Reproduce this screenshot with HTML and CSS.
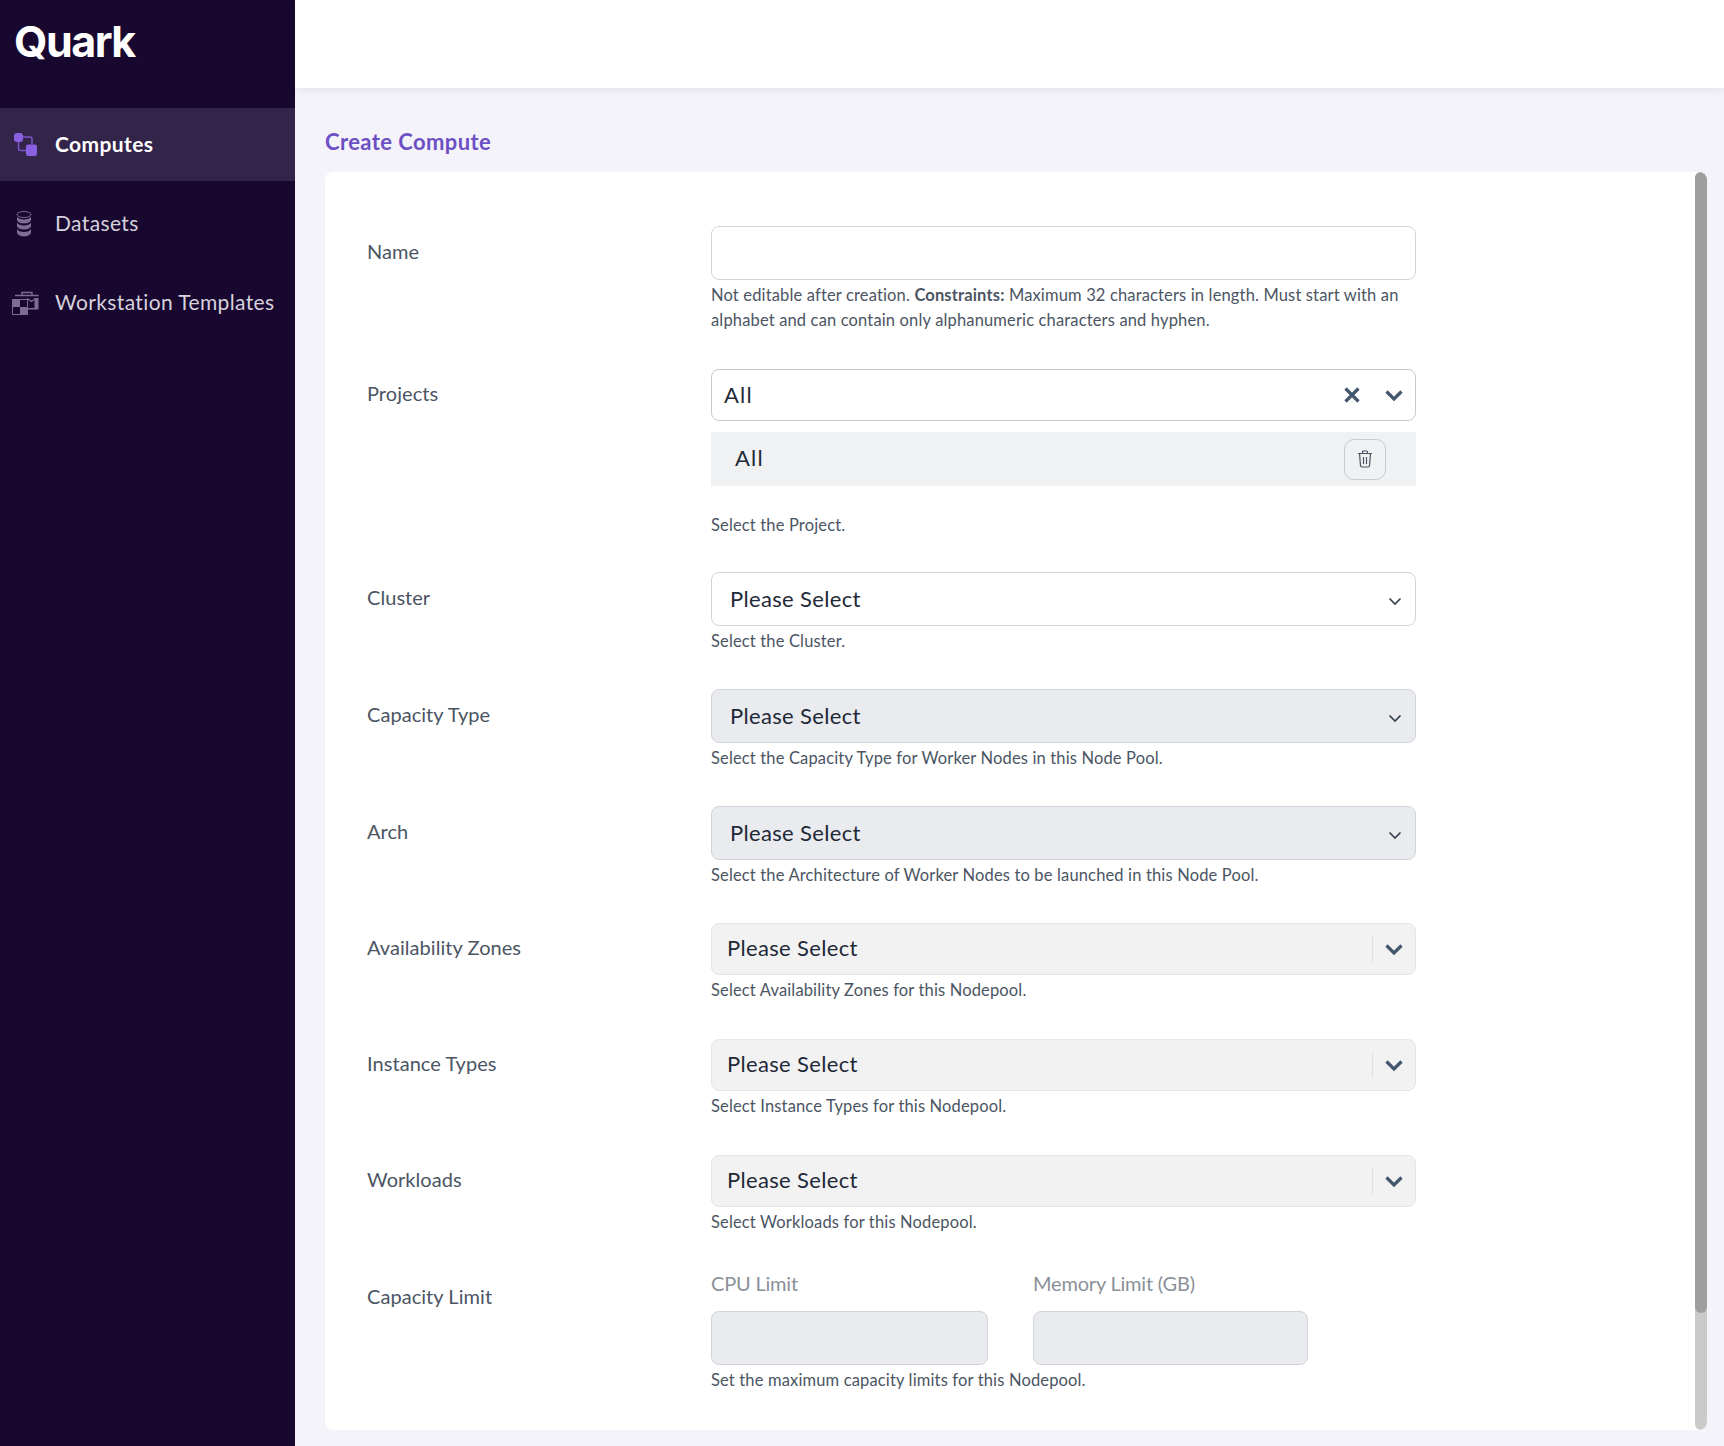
FILE: index.html
```html
<!DOCTYPE html>
<html lang="en">
<head>
<meta charset="utf-8">
<title>Create Compute</title>
<link rel="stylesheet" href="styles.css">
</head>
<body>
<div class="app">
  <aside class="sidebar">
    <div class="logo">Quark</div>
    <nav class="nav">
      <a class="nav-item active">
        <span class="nav-icon">
          <svg class="icon-compute" width="23" height="23" viewBox="0 0 23 23"><rect x="0" y="0" width="9" height="9" rx="3" fill="#8a5fe0"/><rect x="12" y="11.500" width="11" height="11.500" rx="2" fill="#8a5fe0"/><path d="M9 4h7q2 0 2 2v5.500M4.500 9v6.500q0 2 2 2H12" fill="none" stroke="#7b55c8" stroke-width="1.500"/></svg>
        </span>
        <span class="nav-text">Computes</span>
      </a>
      <a class="nav-item">
        <span class="nav-icon">
          <svg class="icon-db" width="16" height="26" viewBox="0 0 16 26"><ellipse cx="8" cy="3.500" rx="7" ry="3" fill="none" stroke="#7a6a90" stroke-width="1"/><path d="M1 5.500c1 2 3.500 3 7 3s6-1 7-3v4c-1 2-3.500 3-7 3s-6-1-7-3z" fill="#7d6c95"/><path d="M1 11.500c1 2 3.500 3 7 3s6-1 7-3v4c-1 2-3.500 3-7 3s-6-1-7-3z" fill="#7d6c95"/><path d="M1 18c1 2 3.500 3 7 3s6-1 7-3v4c-1 2-3.500 3.500-7 3.500s-6-1.500-7-3.500z" fill="#7d6c95"/></svg>
        </span>
        <span class="nav-text">Datasets</span>
      </a>
      <a class="nav-item">
        <span class="nav-icon">
          <svg class="icon-case" width="27" height="24" viewBox="0 0 27 24"><rect x="0.500" y="8.500" width="15" height="15" fill="none" stroke="#7a6a90"/><rect x="0.500" y="8.500" width="7.500" height="7.500" fill="#7d6c95"/><rect x="8" y="16" width="7.500" height="7.500" fill="#7d6c95"/><path d="M10 4V1.500h10V4M3 4.500h23.500M15 7.500l4.500 3 4-3" fill="none" stroke="#7d6c95" stroke-width="1.400"/><path d="M22.500 7H26.500V18.500H16V17H22.500z" fill="#7d6c95"/></svg>
        </span>
        <span class="nav-text">Workstation Templates</span>
      </a>
    </nav>
  </aside>
  <div class="main">
    <header class="topbar"></header>
    <main class="content">
      <h1 class="page-title">Create Compute</h1>
      <section class="card">
        <form class="form">
          <div class="field field-name">
            <label class="field-label">Name</label>
            <div class="control">
              <div class="input"></div>
              <p class="help">Not editable after creation. <b>Constraints:</b> Maximum 32 characters in length. Must start with an alphabet and can contain only alphanumeric characters and hyphen.</p>
            </div>
          </div>
          <div class="field field-projects">
            <label class="field-label">Projects</label>
            <div class="control">
              <div class="combo">
                <span class="combo-value">All</span>
                <svg class="icon-x" width="18" height="18" viewBox="0 0 18 18"><path d="M2.500 2.500l13 13M15.500 2.500l-13 13" stroke="#44566c" stroke-width="3.200" fill="none"/></svg>
                <svg width="20" height="13" viewBox="0 0 20 13"><path d="M2.500 2.500l7.500 7.500 7.500-7.500" stroke="#44566c" stroke-width="3.200" fill="none"/></svg>
              </div>
              <div class="chosen">
                <span class="chosen-value">All</span>
                <button class="trash" type="button">
                  <svg width="16" height="18" viewBox="0 0 16 18"><path d="M1 3.500h14M5.500 3.500V2q0-1 1-1h3q1 0 1 1v1.500M2.500 3.500l1 12q0 1.500 1.500 1.500h6q1.500 0 1.500-1.500l1-12M6.500 7v7M9.500 7v7" fill="none" stroke="#4b5563" stroke-width="1.200"/></svg>
                </button>
              </div>
              <p class="help help-spaced">Select the Project.</p>
            </div>
          </div>
          <div class="field">
            <label class="field-label">Cluster</label>
            <div class="control">
              <div class="select"><span class="select-value">Please Select</span><svg width="14" height="10" viewBox="0 0 14 10"><path d="M1.500 2.500L7 8l5.500-5.500" stroke="#374151" stroke-width="1.700" fill="none"/></svg></div>
              <p class="help">Select the Cluster.</p>
            </div>
          </div>
          <div class="field">
            <label class="field-label">Capacity Type</label>
            <div class="control">
              <div class="select disabled"><span class="select-value">Please Select</span><svg width="14" height="10" viewBox="0 0 14 10"><path d="M1.500 2.500L7 8l5.500-5.500" stroke="#374151" stroke-width="1.700" fill="none"/></svg></div>
              <p class="help">Select the Capacity Type for Worker Nodes in this Node Pool.</p>
            </div>
          </div>
          <div class="field">
            <label class="field-label">Arch</label>
            <div class="control">
              <div class="select disabled"><span class="select-value">Please Select</span><svg width="14" height="10" viewBox="0 0 14 10"><path d="M1.500 2.500L7 8l5.500-5.500" stroke="#374151" stroke-width="1.700" fill="none"/></svg></div>
              <p class="help">Select the Architecture of Worker Nodes to be launched in this Node Pool.</p>
            </div>
          </div>
          <div class="field field-multi">
            <label class="field-label">Availability Zones</label>
            <div class="control">
              <div class="multi"><span class="multi-value">Please Select</span><i class="sep"></i><svg width="20" height="13" viewBox="0 0 20 13"><path d="M2.500 2.500l7.500 7.500 7.500-7.500" stroke="#44566c" stroke-width="3.200" fill="none"/></svg></div>
              <p class="help">Select Availability Zones for this Nodepool.</p>
            </div>
          </div>
          <div class="field field-multi">
            <label class="field-label">Instance Types</label>
            <div class="control">
              <div class="multi"><span class="multi-value">Please Select</span><i class="sep"></i><svg width="20" height="13" viewBox="0 0 20 13"><path d="M2.500 2.500l7.500 7.500 7.500-7.500" stroke="#44566c" stroke-width="3.200" fill="none"/></svg></div>
              <p class="help">Select Instance Types for this Nodepool.</p>
            </div>
          </div>
          <div class="field field-multi">
            <label class="field-label">Workloads</label>
            <div class="control">
              <div class="multi"><span class="multi-value">Please Select</span><i class="sep"></i><svg width="20" height="13" viewBox="0 0 20 13"><path d="M2.500 2.500l7.500 7.500 7.500-7.500" stroke="#44566c" stroke-width="3.200" fill="none"/></svg></div>
              <p class="help">Select Workloads for this Nodepool.</p>
            </div>
          </div>
          <div class="field field-last">
            <label class="field-label">Capacity Limit</label>
            <div class="control">
              <div class="limits">
                <div class="limit">
                  <span class="limit-label">CPU Limit</span>
                  <div class="input filled"></div>
                </div>
                <div class="limit">
                  <span class="limit-label">Memory Limit (GB)</span>
                  <div class="input filled"></div>
                </div>
              </div>
              <p class="help">Set the maximum capacity limits for this Nodepool.</p>
            </div>
          </div>
        </form>
        <div class="scrollbar"><div class="scrollbar-thumb"></div></div>
      </section>
    </main>
  </div>
</div>
</body>
</html>
```
FILE: styles.css
```css
* { box-sizing: border-box; }
html, body { margin: 0; height: 100%; overflow: hidden; }
body { font-family: "Lato", "Liberation Sans", sans-serif; background: #f4f3fa; color: #4b5563; }
.app { display: flex; height: 1446px; }
.sidebar { width: 295px; flex: none; background: #180830; }
.logo { height: 108px; padding: 12px 0 0 14px; font-family: "Inter", sans-serif; font-weight: 700; font-size: 43px; line-height: 58px; letter-spacing: -1.500px; color: #fff; }
.nav { display: flex; flex-direction: column; gap: 6px; }
.nav-item { height: 73px; display: flex; align-items: center; padding-left: 12px; gap: 15px; font-size: 21px; color: #d6d1dc; letter-spacing: 0.38px; }
.nav-item.active { background: #33244a; color: #fff; font-weight: 700; letter-spacing: 0.4px; }
.nav-text { padding-bottom: 2px; }
.nav-icon { width: 28px; display: flex; justify-content: center; }
.icon-compute { margin-right: 2px; }
.icon-db { margin-right: 5px; }
.icon-case { margin-right: 1px; }
.main { flex: 1; min-width: 0; display: flex; flex-direction: column; }
.topbar { height: 88px; flex: none; background: #fff; box-shadow: 0 1px 8px rgba(60, 50, 100, .1); }
.content { flex: 1; min-height: 0; padding: 0 17px 16px 30px; display: flex; flex-direction: column; }
.page-title { margin: 0; height: 84px; padding-top: 40px; font-size: 22px; line-height: 28px; font-weight: 700; letter-spacing: .4px; color: #6d4fc4; }
.card { flex: 1; min-height: 0; position: relative; background: #fff; border-radius: 8px; overflow: hidden; }
.scrollbar { position: absolute; top: 0; right: 0; bottom: 0; width: 12px; background: #cbcaca; border-radius: 6px; }
.scrollbar-thumb { height: 1141px; background: #9e9e9e; border-radius: 6px; }
.form { padding: 54px 0 0 42px; }
.field { display: grid; grid-template-columns: 344px 705px; margin-bottom: 35.500px; }
.field-name { margin-bottom: 36.500px; }
.field-projects { margin-bottom: 34.500px; }
.field-multi { margin-bottom: 36.500px; }
.field-last { margin-bottom: 0; }
.field-label { padding-top: 11.500px; font-size: 20px; line-height: 26px; letter-spacing: .05px; color: #4b5563; }
.field-projects .field-label, .field-multi .field-label { padding-top: 11px; }
.control { min-width: 0; }
.input { height: 54px; background: #fff; border: 1px solid #d1d5db; border-radius: 8px; }
.input.filled { background: #e9ebef; }
.help { margin: 2.500px 0 0; font-size: 16.500px; line-height: 25px; letter-spacing: .15px; color: #4b5563; }
.help b { font-weight: 700; }
.help-spaced { margin-top: 26.500px; }
.combo { height: 52px; display: flex; align-items: center; padding: 0 11px 0 12px; background: #fff; border: 1px solid #c9c9c9; border-radius: 8px; }
.combo-value { flex: 1; padding-bottom: 2px; font-size: 22px; letter-spacing: 1.200px; color: #1f2937; }
.icon-x { margin-right: 23px; }
.chosen { margin-top: 11px; height: 54px; padding: 0 30px 0 24px; display: flex; align-items: center; justify-content: space-between; background: #f0f1f3; font-size: 22px; letter-spacing: 1.200px; color: #1f2937; }
.chosen-value { padding-bottom: 3px; }
.trash { width: 42px; height: 41px; padding: 0; display: flex; align-items: center; justify-content: center; background: transparent; border: 1px solid #c9cacd; border-radius: 10px; }
.select { height: 54px; display: flex; align-items: center; justify-content: space-between; padding: 0 13px 0 18px; background: #fff; border: 1px solid #d1d5db; border-radius: 8px; font-size: 22px; letter-spacing: .34px; color: #1f2937; }
.select-value { padding-bottom: 2px; }
.select svg { margin-top: 4px; }
.select.disabled { background: #e9ebef; }
.multi { height: 52px; display: flex; align-items: center; padding: 0 11px 0 15px; background: #f2f2f2; border: 1px solid #e6e6e6; border-radius: 8px; font-size: 22px; letter-spacing: .34px; color: #1f2937; }
.multi-value { flex: 1; padding-bottom: 3px; }
.sep { width: 1px; height: 26px; background: #e0e0e0; margin-right: 11px; }
.limits { display: grid; grid-template-columns: 277px 275px; gap: 45px; }
.limit-label { display: block; height: 24px; margin-bottom: 16px; font-size: 20px; line-height: 24px; letter-spacing: -.2px; color: #8b9098; }
```
